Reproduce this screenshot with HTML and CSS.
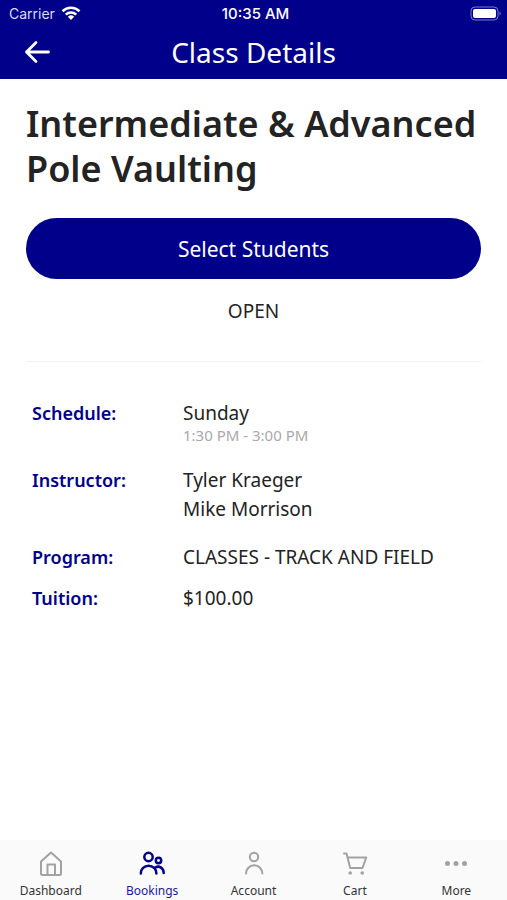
FILE: index.html
```html
<!DOCTYPE html>
<html lang="en">
<head>
    <meta charset="UTF-8">
    <meta name="viewport" content="width=device-width, initial-scale=1.0">
    <title>Class Details</title>
    <link rel="stylesheet" href="styles.css">
</head>
<body>

    <!-- Status bar and page header -->
    <header class="header">
        <div class="status-bar">
            <div class="carrier">
                <span>Carrier</span>
                <svg width="20" height="16" viewBox="0 0 20 16" fill="none" stroke="#fff" stroke-width="2.6">
                    <path d="M1.5 5.2a12.2 12.2 0 0 1 17 0"/>
                    <path d="M4.8 8.6a7.5 7.5 0 0 1 10.4 0"/>
                    <path d="M10 14 6.9 10.8a4.5 4.5 0 0 1 6.2 0z" fill="#fff" stroke="none"/>
                </svg>
            </div>
            <span class="time">10:35 AM</span>
            <svg class="battery" width="32" height="16" viewBox="0 0 32 16">
                <rect x="1" y="1" width="27" height="13" rx="4" fill="none" stroke="#7a7acb" stroke-width="1"/>
                <rect x="3" y="3" width="23" height="9" rx="2" fill="#fff"/>
                <path d="M29.5 5.5a2.3 2.3 0 0 1 0 4z" fill="#7a7acb"/>
            </svg>
        </div>
        <div class="title-bar">
            <button class="back" type="button" aria-label="Back">
                <svg width="26" height="24" viewBox="0 0 26 24" fill="none" stroke="#fff" stroke-width="2.8" stroke-linecap="round" stroke-linejoin="round">
                    <path d="M24.500 12H2.500M12 2.500 2.500 12l9.500 9.500"/>
                </svg>
            </button>
            <h1 class="page-title">Class Details</h1>
        </div>
    </header>

    <!-- Class info -->
    <main class="content">
        <h2 class="class-name">Intermediate &amp; Advanced Pole Vaulting</h2>
        <button class="button" type="button">Select Students</button>
        <p class="status">OPEN</p>

        <dl class="details">
            <div class="row schedule">
                <dt>Schedule:</dt>
                <dd>Sunday <span class="hours">1:30 PM - 3:00 PM</span></dd>
            </div>
            <div class="row instructor">
                <dt>Instructor:</dt>
                <dd>Tyler Kraeger</dd>
                <dd>Mike Morrison</dd>
            </div>
            <div class="row">
                <dt>Program:</dt>
                <dd>CLASSES - TRACK AND FIELD</dd>
            </div>
            <div class="row">
                <dt>Tuition:</dt>
                <dd>$100.00</dd>
            </div>
        </dl>
    </main>

    <!-- Bottom tabs -->
    <nav class="tabs">
        <a class="tab" href="#">
            <svg width="28" height="28" viewBox="0 0 28 28">
                <path d="M4 12.500 14 3.500l10 9V24.500a1.500 1.500 0 0 1-1.500 1.500h-17A1.500 1.500 0 0 1 4 24.500zM10.500 26V15.500h7.500V26"/>
            </svg>
            <span>Dashboard</span>
        </a>
        <a class="tab active" href="#">
            <svg width="28" height="28" viewBox="0 0 28 28">
                <circle cx="10.500" cy="8" r="4.200"/>
                <circle cx="20.500" cy="11.500" r="2.700"/>
                <path d="M2.800 24.500a7.800 7.800 0 0 1 15.600 0M17.500 18.300c4-2 8.200 1 8.200 5.700"/>
            </svg>
            <span>Bookings</span>
        </a>
        <a class="tab" href="#">
            <svg width="28" height="28" viewBox="0 0 28 28">
                <circle cx="14" cy="8" r="4.200"/>
                <path d="M6 24.500a8.200 8.200 0 0 1 16.400 0"/>
            </svg>
            <span>Account</span>
        </a>
        <a class="tab" href="#">
            <svg width="28" height="28" viewBox="0 0 28 28">
                <path d="M3 4.500h2.500L9.200 19h12.300l3.700-10.500H6.700"/>
                <circle class="dot" cx="9.200" cy="24" r="1.800"/>
                <circle class="dot" cx="21.200" cy="24" r="1.800"/>
            </svg>
            <span>Cart</span>
        </a>
        <a class="tab" href="#">
            <svg width="28" height="28" viewBox="0 0 28 28">
                <circle class="dot" cx="5.500" cy="14.500" r="2.500"/>
                <circle class="dot" cx="14" cy="14.500" r="2.500"/>
                <circle class="dot" cx="22.500" cy="14.500" r="2.500"/>
            </svg>
            <span>More</span>
        </a>
    </nav>

</body>
</html>
```

FILE: styles.css
```css
/* General body style */
* {
    box-sizing: border-box;
}

body {
    font-family: 'Noto Sans', sans-serif;
    margin: 0;
    min-height: 100vh;
    display: flex;
    flex-direction: column;
    background-color: #fff;
    color: #232323;
}

button {
    font-family: inherit;
    border: none;
    cursor: pointer;
}

svg {
    display: block;
}

/* Header */
.header {
    background-color: #00008b;
    color: #fff;
}

.status-bar {
    display: grid;
    grid-template-columns: 1fr auto 1fr;
    align-items: center;
    height: 27px;
    padding: 0 5px 0 9px;
    font-family: Inter, sans-serif;
    font-size: 14px;
}

.carrier {
    display: flex;
    align-items: center;
    gap: 6px;
    color: #dcdcf2;
}

.time {
    font-size: 15px;
    font-weight: 500;
}

.battery {
    justify-self: end;
}

.title-bar {
    display: grid;
    grid-template-columns: 40px 1fr 40px;
    align-items: center;
    height: 52px;
    padding: 0 24px 3px;
}

.back {
    padding: 0;
    background: none;
}

.page-title {
    margin: 0;
    font-size: 28px;
    line-height: 36px;
    font-weight: 400;
    text-align: center;
}

/* Class info */
.content {
    flex: 1;
    padding: 22px 26px;
}

.class-name {
    margin: 0 0 27px;
    font-size: 36px;
    line-height: 45px;
    font-weight: 600;
}

.button {
    display: block;
    width: 100%;
    height: 61px;
    border-radius: 31px;
    background-color: #00008b;
    color: #fff;
    font-size: 21px;
}

.status {
    margin: 18px 0 36px;
    font-size: 19px;
    line-height: 28px;
    text-align: center;
}

/* Detail rows */
.details {
    margin: 0;
    padding: 37px 6px;
    border-top: 1px solid #f0f0f0;
    font-size: 19px;
    line-height: 29px;
}

.row {
    display: grid;
    grid-template-columns: 151px 1fr;
    margin-bottom: 12px;
}

.row dt {
    color: #00008b;
    font-size: 18px;
    font-weight: 600;
}

.row dd {
    grid-column: 2;
    margin: 0;
}

.schedule {
    margin-bottom: 24px;
}

.instructor {
    margin-bottom: 19px;
}

.hours {
    display: block;
    color: #a9a9a9;
    font-size: 15px;
    line-height: 14px;
}

/* Bottom tabs */
.tabs {
    display: flex;
    background-color: #fafafa;
}

.tab {
    flex: 1;
    display: flex;
    flex-direction: column;
    align-items: center;
    gap: 5px;
    padding: 9px 0 0;
    color: #333;
    font-size: 12px;
    line-height: 18px;
    text-decoration: none;
}

.tab svg {
    fill: none;
    stroke: #a2a2a2;
    stroke-width: 2;
    stroke-linecap: round;
    stroke-linejoin: round;
}

.tab .dot {
    fill: #a2a2a2;
    stroke: none;
}

.tab.active {
    color: #1a1a9a;
}

.tab.active svg {
    stroke: #00008b;
    stroke-width: 2.5;
}
```
